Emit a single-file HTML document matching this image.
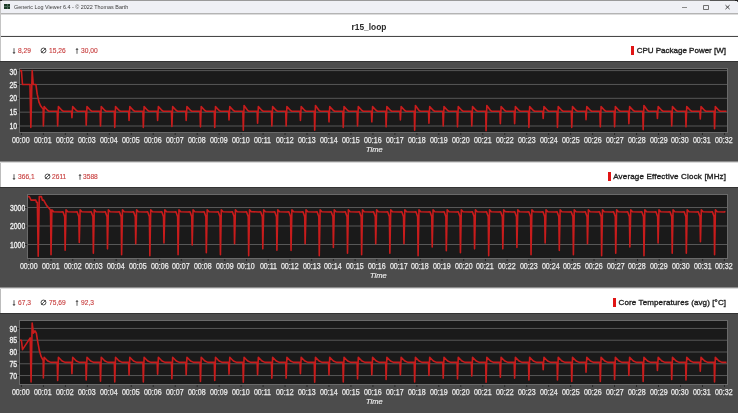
<!DOCTYPE html>
<html><head><meta charset="utf-8"><style>
html,body{margin:0;padding:0;}
body{width:738px;height:413px;overflow:hidden;position:relative;background:#4c4c4c;font-family:"Liberation Sans",sans-serif;}
.abs{position:absolute;}
.stat{position:absolute;font-size:8px;line-height:10px;white-space:nowrap;color:#c84040;-webkit-text-stroke:0.15px #c84040;}
.arr{position:absolute;font-size:7px;line-height:10px;white-space:nowrap;color:#303030;}
.leg{position:absolute;font-size:8px;line-height:10px;white-space:nowrap;color:#232323;-webkit-text-stroke:0.35px #232323;}
.leg::before{content:"";position:absolute;left:-5.2px;top:-0.4px;width:2.7px;height:9.2px;background:#e01515;-webkit-text-stroke:0}
.xl{position:absolute;width:30px;text-align:center;font-size:8.6px;line-height:10px;color:#ececec;white-space:nowrap}
.xl span{display:inline-block;transform:scaleX(0.82);-webkit-text-stroke:0.25px #ececec}
.yl{position:absolute;left:0;text-align:right;font-size:8.2px;line-height:10px;color:#e8e8e8;white-space:nowrap}
.yl span{display:inline-block;transform:scaleX(0.84);transform-origin:100% 50%;-webkit-text-stroke:0.3px #f0f0f0;color:#f0f0f0}
svg{position:absolute;left:0;top:0;}
*{-webkit-font-smoothing:antialiased;}
.wrap{position:absolute;left:0;top:0;width:738px;height:413px;will-change:transform;}
</style></head><body><div class="wrap">

<div class="abs" style="left:0;top:0;width:738px;height:14px;background:#eff0f5"></div>
<div class="abs" style="left:0;top:0;width:738px;height:1px;background:#9a9a9a"></div>
<div class="abs" style="left:0;top:13px;width:738px;height:1px;background:#b4b4b4"></div>
<div class="abs" style="left:0;top:14px;width:738px;height:1px;background:#dcdcdc"></div>
<div class="abs" style="left:0;top:15px;width:738px;height:21px;background:#fff"></div>
<div class="abs" style="left:0;top:36px;width:738px;height:1px;background:#484848"></div>
<div class="abs" style="left:0;top:35px;width:738px;height:1px;background:#f2f2f2"></div>
<div class="abs" style="left:0;top:37px;width:738px;height:24px;background:#fff"></div>
<div class="abs" style="left:4px;top:4px;width:6px;height:5px;background:#1c3a28"></div>
<div class="abs" style="left:4px;top:6px;width:6px;height:1px;background:#4a6a58"></div>
<div class="abs" style="left:6.5px;top:4px;width:1px;height:5px;background:#4a6a58"></div>
<div class="abs" style="left:0;top:0;width:2px;height:1px;background:#222"></div>
<div class="abs" style="left:710px;top:0;width:28px;height:1px;background:#555"></div>
<div class="abs" style="left:735px;top:0;width:3px;height:1px;background:#222"></div>
<div class="abs" style="left:737px;top:1px;width:1px;height:1px;background:#555"></div>
<div class="abs" style="left:14px;top:2.3px;font-size:6.2px;line-height:10px;color:#3c3c3c;white-space:nowrap;transform:scaleX(0.875);transform-origin:0 0">Generic Log Viewer 6.4 - © 2022 Thomas Barth</div>
<div class="abs" style="left:682px;top:6.5px;width:5px;height:1px;background:#8a8a8a"></div>
<div class="abs" style="left:703.3px;top:4.8px;width:3.4px;height:3.4px;border:0.9px solid #707070;border-radius:0.8px"></div>
<svg width="738" height="413" style="pointer-events:none"><path d="M725.5 5.2 L729.6 9.1 M729.6 5.2 L725.5 9.1" stroke="#3a3a3a" stroke-width="0.95"/></svg>
<div class="abs" style="left:0;top:20.5px;width:738px;text-align:center;font-size:8.4px;line-height:12px;font-weight:bold;color:#2a2a2a">r15_loop</div>
<div class="abs" style="left:0;top:61px;width:738px;height:1px;background:#333"></div>
<div class="abs" style="left:0;top:161px;width:738px;height:1px;background:#8c8c8c"></div>
<div class="abs" style="left:0;width:738px;background:#fff;top:162px;height:25px"></div>
<div class="abs" style="left:0;width:1px;background:#bcbcbc;top:162px;height:25px"></div>
<div class="abs" style="left:0;width:738px;background:#dadada;top:162px;height:1px"></div>
<div class="xl" style="left:6.15px;top:135.2px"><span>00:00</span></div>
<div class="xl" style="left:28.12px;top:135.2px"><span>00:01</span></div>
<div class="xl" style="left:50.09px;top:135.2px"><span>00:02</span></div>
<div class="xl" style="left:72.06px;top:135.2px"><span>00:03</span></div>
<div class="xl" style="left:94.03px;top:135.2px"><span>00:04</span></div>
<div class="xl" style="left:116.00px;top:135.2px"><span>00:05</span></div>
<div class="xl" style="left:137.97px;top:135.2px"><span>00:06</span></div>
<div class="xl" style="left:159.94px;top:135.2px"><span>00:07</span></div>
<div class="xl" style="left:181.91px;top:135.2px"><span>00:08</span></div>
<div class="xl" style="left:203.88px;top:135.2px"><span>00:09</span></div>
<div class="xl" style="left:225.85px;top:135.2px"><span>00:10</span></div>
<div class="xl" style="left:247.82px;top:135.2px"><span>00:11</span></div>
<div class="xl" style="left:269.79px;top:135.2px"><span>00:12</span></div>
<div class="xl" style="left:291.76px;top:135.2px"><span>00:13</span></div>
<div class="xl" style="left:313.73px;top:135.2px"><span>00:14</span></div>
<div class="xl" style="left:335.70px;top:135.2px"><span>00:15</span></div>
<div class="xl" style="left:357.67px;top:135.2px"><span>00:16</span></div>
<div class="xl" style="left:379.64px;top:135.2px"><span>00:17</span></div>
<div class="xl" style="left:401.61px;top:135.2px"><span>00:18</span></div>
<div class="xl" style="left:423.58px;top:135.2px"><span>00:19</span></div>
<div class="xl" style="left:445.55px;top:135.2px"><span>00:20</span></div>
<div class="xl" style="left:467.52px;top:135.2px"><span>00:21</span></div>
<div class="xl" style="left:489.49px;top:135.2px"><span>00:22</span></div>
<div class="xl" style="left:511.46px;top:135.2px"><span>00:23</span></div>
<div class="xl" style="left:533.43px;top:135.2px"><span>00:24</span></div>
<div class="xl" style="left:555.40px;top:135.2px"><span>00:25</span></div>
<div class="xl" style="left:577.37px;top:135.2px"><span>00:26</span></div>
<div class="xl" style="left:599.34px;top:135.2px"><span>00:27</span></div>
<div class="xl" style="left:621.31px;top:135.2px"><span>00:28</span></div>
<div class="xl" style="left:643.28px;top:135.2px"><span>00:29</span></div>
<div class="xl" style="left:665.25px;top:135.2px"><span>00:30</span></div>
<div class="xl" style="left:687.22px;top:135.2px"><span>00:31</span></div>
<div class="xl" style="left:709.19px;top:135.2px"><span>00:32</span></div>
<div class="yl" style="width:17.6px;top:122.10px"><span>10</span></div>
<div class="yl" style="width:17.6px;top:108.25px"><span>15</span></div>
<div class="yl" style="width:17.6px;top:94.40px"><span>20</span></div>
<div class="yl" style="width:17.6px;top:80.55px"><span>25</span></div>
<div class="yl" style="width:17.6px;top:67.50px"><span>30</span></div>
<div class="abs" style="left:354.30px;width:40px;top:145px;text-align:center;font-size:7.5px;line-height:10px;font-style:italic;color:#f0f0f0;-webkit-text-stroke:0.15px #f0f0f0">Time</div>
<div class="abs" style="left:0;top:187px;width:738px;height:1px;background:#333"></div>
<div class="abs" style="left:0;top:287px;width:738px;height:1px;background:#8c8c8c"></div>
<div class="abs" style="left:0;width:738px;background:#fff;top:288px;height:25px"></div>
<div class="abs" style="left:0;width:1px;background:#bcbcbc;top:288px;height:25px"></div>
<div class="abs" style="left:0;width:738px;background:#dadada;top:288px;height:1px"></div>
<div class="xl" style="left:14.05px;top:261.2px"><span>00:00</span></div>
<div class="xl" style="left:35.77px;top:261.2px"><span>00:01</span></div>
<div class="xl" style="left:57.49px;top:261.2px"><span>00:02</span></div>
<div class="xl" style="left:79.21px;top:261.2px"><span>00:03</span></div>
<div class="xl" style="left:100.93px;top:261.2px"><span>00:04</span></div>
<div class="xl" style="left:122.65px;top:261.2px"><span>00:05</span></div>
<div class="xl" style="left:144.37px;top:261.2px"><span>00:06</span></div>
<div class="xl" style="left:166.09px;top:261.2px"><span>00:07</span></div>
<div class="xl" style="left:187.81px;top:261.2px"><span>00:08</span></div>
<div class="xl" style="left:209.53px;top:261.2px"><span>00:09</span></div>
<div class="xl" style="left:231.25px;top:261.2px"><span>00:10</span></div>
<div class="xl" style="left:252.97px;top:261.2px"><span>00:11</span></div>
<div class="xl" style="left:274.69px;top:261.2px"><span>00:12</span></div>
<div class="xl" style="left:296.41px;top:261.2px"><span>00:13</span></div>
<div class="xl" style="left:318.13px;top:261.2px"><span>00:14</span></div>
<div class="xl" style="left:339.85px;top:261.2px"><span>00:15</span></div>
<div class="xl" style="left:361.57px;top:261.2px"><span>00:16</span></div>
<div class="xl" style="left:383.29px;top:261.2px"><span>00:17</span></div>
<div class="xl" style="left:405.01px;top:261.2px"><span>00:18</span></div>
<div class="xl" style="left:426.73px;top:261.2px"><span>00:19</span></div>
<div class="xl" style="left:448.45px;top:261.2px"><span>00:20</span></div>
<div class="xl" style="left:470.17px;top:261.2px"><span>00:21</span></div>
<div class="xl" style="left:491.89px;top:261.2px"><span>00:22</span></div>
<div class="xl" style="left:513.61px;top:261.2px"><span>00:23</span></div>
<div class="xl" style="left:535.33px;top:261.2px"><span>00:24</span></div>
<div class="xl" style="left:557.05px;top:261.2px"><span>00:25</span></div>
<div class="xl" style="left:578.77px;top:261.2px"><span>00:26</span></div>
<div class="xl" style="left:600.49px;top:261.2px"><span>00:27</span></div>
<div class="xl" style="left:622.21px;top:261.2px"><span>00:28</span></div>
<div class="xl" style="left:643.93px;top:261.2px"><span>00:29</span></div>
<div class="xl" style="left:665.65px;top:261.2px"><span>00:30</span></div>
<div class="xl" style="left:687.37px;top:261.2px"><span>00:31</span></div>
<div class="xl" style="left:709.09px;top:261.2px"><span>00:32</span></div>
<div class="yl" style="width:25.7px;top:240.60px"><span>1000</span></div>
<div class="yl" style="width:25.7px;top:222.10px"><span>2000</span></div>
<div class="yl" style="width:25.7px;top:203.60px"><span>3000</span></div>
<div class="abs" style="left:358.30px;width:40px;top:271px;text-align:center;font-size:7.5px;line-height:10px;font-style:italic;color:#f0f0f0;-webkit-text-stroke:0.15px #f0f0f0">Time</div>
<div class="abs" style="left:0;top:313px;width:738px;height:1px;background:#333"></div>
<div class="xl" style="left:6.15px;top:387.2px"><span>00:00</span></div>
<div class="xl" style="left:28.12px;top:387.2px"><span>00:01</span></div>
<div class="xl" style="left:50.09px;top:387.2px"><span>00:02</span></div>
<div class="xl" style="left:72.06px;top:387.2px"><span>00:03</span></div>
<div class="xl" style="left:94.03px;top:387.2px"><span>00:04</span></div>
<div class="xl" style="left:116.00px;top:387.2px"><span>00:05</span></div>
<div class="xl" style="left:137.97px;top:387.2px"><span>00:06</span></div>
<div class="xl" style="left:159.94px;top:387.2px"><span>00:07</span></div>
<div class="xl" style="left:181.91px;top:387.2px"><span>00:08</span></div>
<div class="xl" style="left:203.88px;top:387.2px"><span>00:09</span></div>
<div class="xl" style="left:225.85px;top:387.2px"><span>00:10</span></div>
<div class="xl" style="left:247.82px;top:387.2px"><span>00:11</span></div>
<div class="xl" style="left:269.79px;top:387.2px"><span>00:12</span></div>
<div class="xl" style="left:291.76px;top:387.2px"><span>00:13</span></div>
<div class="xl" style="left:313.73px;top:387.2px"><span>00:14</span></div>
<div class="xl" style="left:335.70px;top:387.2px"><span>00:15</span></div>
<div class="xl" style="left:357.67px;top:387.2px"><span>00:16</span></div>
<div class="xl" style="left:379.64px;top:387.2px"><span>00:17</span></div>
<div class="xl" style="left:401.61px;top:387.2px"><span>00:18</span></div>
<div class="xl" style="left:423.58px;top:387.2px"><span>00:19</span></div>
<div class="xl" style="left:445.55px;top:387.2px"><span>00:20</span></div>
<div class="xl" style="left:467.52px;top:387.2px"><span>00:21</span></div>
<div class="xl" style="left:489.49px;top:387.2px"><span>00:22</span></div>
<div class="xl" style="left:511.46px;top:387.2px"><span>00:23</span></div>
<div class="xl" style="left:533.43px;top:387.2px"><span>00:24</span></div>
<div class="xl" style="left:555.40px;top:387.2px"><span>00:25</span></div>
<div class="xl" style="left:577.37px;top:387.2px"><span>00:26</span></div>
<div class="xl" style="left:599.34px;top:387.2px"><span>00:27</span></div>
<div class="xl" style="left:621.31px;top:387.2px"><span>00:28</span></div>
<div class="xl" style="left:643.28px;top:387.2px"><span>00:29</span></div>
<div class="xl" style="left:665.25px;top:387.2px"><span>00:30</span></div>
<div class="xl" style="left:687.22px;top:387.2px"><span>00:31</span></div>
<div class="xl" style="left:709.19px;top:387.2px"><span>00:32</span></div>
<div class="yl" style="width:17.6px;top:371.65px"><span>70</span></div>
<div class="yl" style="width:17.6px;top:359.87px"><span>75</span></div>
<div class="yl" style="width:17.6px;top:348.10px"><span>80</span></div>
<div class="yl" style="width:17.6px;top:336.32px"><span>85</span></div>
<div class="yl" style="width:17.6px;top:325.35px"><span>90</span></div>
<div class="abs" style="left:354.30px;width:40px;top:397px;text-align:center;font-size:7.5px;line-height:10px;font-style:italic;color:#f0f0f0;-webkit-text-stroke:0.15px #f0f0f0">Time</div>
<svg width="738" height="413">
<rect x="19" y="68" width="709" height="65" fill="#1a1a1a"/>
<line x1="19" x2="728" y1="126.00" y2="126.00" stroke="#575757" stroke-width="1"/>
<rect x="17" y="125.50" width="2" height="1" fill="#262626"/>
<line x1="19" x2="728" y1="112.15" y2="112.15" stroke="#575757" stroke-width="1"/>
<rect x="17" y="111.65" width="2" height="1" fill="#262626"/>
<line x1="19" x2="728" y1="98.30" y2="98.30" stroke="#575757" stroke-width="1"/>
<rect x="17" y="97.80" width="2" height="1" fill="#262626"/>
<line x1="19" x2="728" y1="84.45" y2="84.45" stroke="#575757" stroke-width="1"/>
<rect x="17" y="83.95" width="2" height="1" fill="#262626"/>
<line x1="19" x2="728" y1="70.60" y2="70.60" stroke="#575757" stroke-width="1"/>
<rect x="17" y="70.10" width="2" height="1" fill="#262626"/>
<rect x="19.5" y="68.5" width="708" height="64" fill="none" stroke="#6a6a6a" stroke-width="1"/>
<polyline points="20.00,70.60 21.40,70.60 22.50,84.45 29.97,84.45 30.85,127.38 32.17,70.60 33.26,84.45 35.90,84.45 37.22,94.14 38.98,102.18 40.73,106.06 42.05,107.72 43.15,108.83 43.37,126.00 44.14,106.61 47.76,110.49 49.08,111.18 57.21,111.18 57.65,126.00 58.42,106.61 62.04,110.49 63.36,111.18 71.49,111.18 71.93,117.69 72.70,106.61 76.32,110.49 77.64,111.18 85.77,111.18 86.21,125.17 86.98,106.61 90.61,110.49 91.92,111.18 100.05,111.18 100.49,126.00 101.26,106.61 104.89,110.49 106.20,111.18 114.33,111.18 114.77,127.38 115.54,106.61 119.17,110.49 120.48,111.18 128.61,111.18 129.05,120.46 129.82,106.61 133.45,110.49 134.77,111.18 142.89,111.18 143.33,127.38 144.10,106.61 147.73,110.49 149.05,111.18 157.17,111.18 157.61,120.46 158.38,106.61 162.01,110.49 163.33,111.18 171.46,111.18 171.89,126.55 172.66,106.61 176.29,110.49 177.61,111.18 185.74,111.18 186.17,120.46 186.94,106.61 190.57,110.49 191.89,111.18 200.02,111.18 200.46,126.83 201.22,106.61 204.85,110.49 206.17,111.18 214.30,111.18 214.74,127.38 215.50,106.61 219.13,110.49 220.45,111.18 228.58,111.18 229.02,119.91 229.79,106.61 233.41,110.49 234.73,111.18 242.86,111.18 243.30,130.15 244.07,105.50 247.69,110.49 249.01,111.18 257.14,111.18 257.58,123.23 258.35,106.61 261.97,110.49 263.29,111.18 271.42,111.18 271.86,126.00 272.63,106.61 276.25,110.49 277.57,111.18 285.70,111.18 286.14,126.00 286.91,106.61 290.53,110.49 291.85,111.18 299.98,111.18 300.42,120.46 301.19,106.61 304.81,110.49 306.13,111.18 314.26,111.18 314.70,130.15 315.47,105.50 319.09,110.49 320.41,111.18 328.54,111.18 328.98,121.84 329.75,106.61 333.37,110.49 334.69,111.18 342.82,111.18 343.26,127.38 344.03,106.61 347.65,110.49 348.97,111.18 357.10,111.18 357.54,126.00 358.31,106.61 361.93,110.49 363.25,111.18 371.38,111.18 371.82,121.84 372.59,106.61 376.22,110.49 377.53,111.18 385.66,111.18 386.10,126.83 386.87,106.61 390.50,110.49 391.81,111.18 399.94,111.18 400.38,119.91 401.15,106.61 404.78,110.49 406.09,111.18 414.22,111.18 414.66,130.15 415.43,105.50 419.06,110.49 420.38,111.18 428.50,111.18 428.94,123.23 429.71,106.61 433.34,110.49 434.66,111.18 442.78,111.18 443.22,126.00 443.99,106.61 447.62,110.49 448.94,111.18 457.07,111.18 457.50,126.83 458.27,106.61 461.90,110.49 463.22,111.18 471.35,111.18 471.78,126.00 472.55,106.61 476.18,110.49 477.50,111.18 485.63,111.18 486.07,130.71 486.83,105.50 490.46,110.49 491.78,111.18 499.91,111.18 500.35,123.78 501.11,106.61 504.74,110.49 506.06,111.18 514.19,111.18 514.63,123.78 515.40,106.61 519.02,110.49 520.34,111.18 528.47,111.18 528.91,127.38 529.68,106.61 533.30,110.49 534.62,111.18 542.75,111.18 543.19,118.52 543.96,106.61 547.58,110.49 548.90,111.18 557.03,111.18 557.47,127.38 558.24,106.61 561.86,110.49 563.18,111.18 571.31,111.18 571.75,127.38 572.52,106.61 576.14,110.49 577.46,111.18 585.59,111.18 586.03,119.63 586.80,106.61 590.42,110.49 591.74,111.18 599.87,111.18 600.31,126.83 601.08,106.61 604.70,110.49 606.02,111.18 614.15,111.18 614.59,126.83 615.36,106.61 618.98,110.49 620.30,111.18 628.43,111.18 628.87,123.78 629.64,106.61 633.26,110.49 634.58,111.18 642.71,111.18 643.15,129.60 643.92,105.50 647.54,110.49 648.86,111.18 656.99,111.18 657.43,118.52 658.20,106.61 661.83,110.49 663.14,111.18 671.27,111.18 671.71,126.00 672.48,106.61 676.11,110.49 677.42,111.18 685.55,111.18 685.99,126.83 686.76,106.61 690.39,110.49 691.70,111.18 699.83,111.18 700.27,119.07 701.04,106.61 704.67,110.49 705.99,111.18 714.11,111.18 714.55,128.77 715.32,106.61 718.95,110.49 720.27,111.18 726.50,111.18" fill="none" stroke="#c81c1c" stroke-width="1.6" stroke-linejoin="round"/>
<rect x="20.90" y="133" width="1" height="2" fill="#262626"/>
<rect x="42.87" y="133" width="1" height="2" fill="#262626"/>
<rect x="64.84" y="133" width="1" height="2" fill="#262626"/>
<rect x="86.81" y="133" width="1" height="2" fill="#262626"/>
<rect x="108.78" y="133" width="1" height="2" fill="#262626"/>
<rect x="130.75" y="133" width="1" height="2" fill="#262626"/>
<rect x="152.72" y="133" width="1" height="2" fill="#262626"/>
<rect x="174.69" y="133" width="1" height="2" fill="#262626"/>
<rect x="196.66" y="133" width="1" height="2" fill="#262626"/>
<rect x="218.63" y="133" width="1" height="2" fill="#262626"/>
<rect x="240.60" y="133" width="1" height="2" fill="#262626"/>
<rect x="262.57" y="133" width="1" height="2" fill="#262626"/>
<rect x="284.54" y="133" width="1" height="2" fill="#262626"/>
<rect x="306.51" y="133" width="1" height="2" fill="#262626"/>
<rect x="328.48" y="133" width="1" height="2" fill="#262626"/>
<rect x="350.45" y="133" width="1" height="2" fill="#262626"/>
<rect x="372.42" y="133" width="1" height="2" fill="#262626"/>
<rect x="394.39" y="133" width="1" height="2" fill="#262626"/>
<rect x="416.36" y="133" width="1" height="2" fill="#262626"/>
<rect x="438.33" y="133" width="1" height="2" fill="#262626"/>
<rect x="460.30" y="133" width="1" height="2" fill="#262626"/>
<rect x="482.27" y="133" width="1" height="2" fill="#262626"/>
<rect x="504.24" y="133" width="1" height="2" fill="#262626"/>
<rect x="526.21" y="133" width="1" height="2" fill="#262626"/>
<rect x="548.18" y="133" width="1" height="2" fill="#262626"/>
<rect x="570.15" y="133" width="1" height="2" fill="#262626"/>
<rect x="592.12" y="133" width="1" height="2" fill="#262626"/>
<rect x="614.09" y="133" width="1" height="2" fill="#262626"/>
<rect x="636.06" y="133" width="1" height="2" fill="#262626"/>
<rect x="658.03" y="133" width="1" height="2" fill="#262626"/>
<rect x="680.00" y="133" width="1" height="2" fill="#262626"/>
<rect x="701.97" y="133" width="1" height="2" fill="#262626"/>
<rect x="723.94" y="133" width="1" height="2" fill="#262626"/>
<rect x="27" y="194" width="701" height="65" fill="#1a1a1a"/>
<line x1="27" x2="728" y1="244.50" y2="244.50" stroke="#575757" stroke-width="1"/>
<rect x="25" y="244.00" width="2" height="1" fill="#262626"/>
<line x1="27" x2="728" y1="226.00" y2="226.00" stroke="#575757" stroke-width="1"/>
<rect x="25" y="225.50" width="2" height="1" fill="#262626"/>
<line x1="27" x2="728" y1="207.50" y2="207.50" stroke="#575757" stroke-width="1"/>
<rect x="25" y="207.00" width="2" height="1" fill="#262626"/>
<rect x="27.5" y="194.5" width="700" height="64" fill="none" stroke="#6a6a6a" stroke-width="1"/>
<polyline points="28.00,196.62 29.30,196.62 31.04,200.10 35.82,200.10 36.47,202.32 37.34,202.32 38.21,256.23 39.29,196.62 41.46,196.62 42.33,200.10 43.64,200.10 46.68,205.65 49.28,208.43 50.37,209.91 50.59,216.75 51.02,254.71 51.89,209.91 53.63,211.75 60.79,211.94 62.97,211.75 64.70,216.75 65.14,250.16 66.01,209.91 67.74,211.75 74.91,211.94 77.08,211.75 78.82,216.75 79.26,242.47 80.12,209.91 81.86,211.75 89.03,211.94 91.20,211.75 92.94,216.75 93.37,253.19 94.24,209.91 95.98,211.75 103.15,211.94 105.32,211.75 107.06,216.75 107.49,248.85 108.36,209.91 110.10,211.75 117.27,211.94 119.44,211.75 121.18,216.75 121.61,254.71 122.48,209.91 124.22,211.75 131.38,211.94 133.56,211.75 135.29,216.75 135.73,243.76 136.60,209.91 138.33,211.75 145.50,211.94 147.67,211.75 149.41,216.75 149.85,255.78 150.71,209.91 152.45,211.75 159.62,211.94 161.79,211.75 163.53,216.75 163.96,243.02 164.83,209.91 166.57,211.75 173.74,211.94 175.91,211.75 177.65,216.75 178.08,254.71 178.95,209.91 180.69,211.75 187.86,211.94 190.03,211.75 191.77,216.75 192.20,245.00 193.07,209.91 194.81,211.75 201.97,211.94 204.15,211.75 205.88,216.75 206.32,252.70 207.19,209.91 208.92,211.75 216.09,211.94 218.26,211.75 220.00,216.75 220.44,254.71 221.30,209.91 223.04,211.75 230.21,211.94 232.38,211.75 234.12,216.75 234.55,243.76 235.42,209.91 237.16,211.75 244.33,211.94 246.50,211.75 248.24,216.75 248.67,255.78 249.54,209.91 251.28,211.75 258.45,211.94 260.62,211.75 262.36,216.75 262.79,248.85 263.66,209.91 265.40,211.75 272.56,211.94 274.74,211.75 276.47,216.75 276.91,250.16 277.78,209.91 279.51,211.75 286.68,211.94 288.85,211.75 290.59,216.75 291.03,250.36 291.89,209.91 293.63,211.75 300.80,211.94 302.97,211.75 304.71,216.75 305.14,243.76 306.01,209.91 307.75,211.75 314.92,211.94 317.09,211.75 318.83,216.75 319.26,255.78 320.13,209.91 321.87,211.75 329.04,211.94 331.21,211.75 332.95,216.75 333.38,247.53 334.25,209.91 335.99,211.75 343.15,211.94 345.33,211.75 347.06,216.75 347.50,253.19 348.37,209.91 350.10,211.75 357.27,211.94 359.44,211.75 361.18,216.75 361.62,254.71 362.48,209.91 364.22,211.75 371.39,211.94 373.56,211.75 375.30,216.75 375.73,243.76 376.60,209.91 378.34,211.75 385.51,211.94 387.68,211.75 389.42,216.75 389.85,253.19 390.72,209.91 392.46,211.75 399.63,211.94 401.80,211.75 403.54,216.75 403.97,243.76 404.84,209.91 406.58,211.75 413.74,211.94 415.92,211.75 417.65,216.75 418.09,255.78 418.96,209.91 420.69,211.75 427.86,211.94 430.03,211.75 431.77,216.75 432.21,247.02 433.07,209.91 434.81,211.75 441.98,211.94 444.15,211.75 445.89,216.75 446.32,250.66 447.19,209.91 448.93,211.75 456.10,211.94 458.27,211.75 460.01,216.75 460.44,252.70 461.31,209.91 463.05,211.75 470.22,211.94 472.39,211.75 474.13,216.75 474.56,248.85 475.43,209.91 477.17,211.75 484.33,211.94 486.51,211.75 488.24,216.75 488.68,255.78 489.55,209.91 491.28,211.75 498.45,211.94 500.62,211.75 502.36,216.75 502.80,248.85 503.66,209.91 505.40,211.75 512.57,211.94 514.74,211.75 516.48,216.75 516.91,247.53 517.78,209.91 519.52,211.75 526.69,211.94 528.86,211.75 530.60,216.75 531.03,254.71 531.90,209.91 533.64,211.75 540.81,211.94 542.98,211.75 544.72,216.75 545.15,243.02 546.02,209.91 547.76,211.75 554.92,211.94 557.10,211.75 558.83,216.75 559.27,250.36 560.14,209.91 561.87,211.75 569.04,211.94 571.21,211.75 572.95,216.75 573.39,254.71 574.25,209.91 575.99,211.75 583.16,211.94 585.33,211.75 587.07,216.75 587.50,243.76 588.37,209.91 590.11,211.75 597.28,211.94 599.45,211.75 601.19,216.75 601.62,255.78 602.49,209.91 604.23,211.75 611.40,211.94 613.57,211.75 615.31,216.75 615.74,253.19 616.61,209.91 618.35,211.75 625.51,211.94 627.69,211.75 629.42,216.75 629.86,247.02 630.73,209.91 632.46,211.75 639.63,211.94 641.80,211.75 643.54,216.75 643.98,255.78 644.84,209.91 646.58,211.75 653.75,211.94 655.92,211.75 657.66,216.75 658.09,243.02 658.96,209.91 660.70,211.75 667.87,211.94 670.04,211.75 671.78,216.75 672.21,253.19 673.08,209.91 674.82,211.75 681.99,211.94 684.16,211.75 685.90,216.75 686.33,253.19 687.20,209.91 688.94,211.75 696.10,211.94 698.28,211.75 700.01,216.75 700.45,241.72 701.32,209.91 703.05,211.75 710.22,211.94 712.39,211.75 714.13,216.75 714.57,254.71 715.43,209.91 717.17,211.75 724.34,211.94 725.43,211.38" fill="none" stroke="#c81c1c" stroke-width="1.6" stroke-linejoin="round"/>
<rect x="28.80" y="259" width="1" height="2" fill="#262626"/>
<rect x="50.52" y="259" width="1" height="2" fill="#262626"/>
<rect x="72.24" y="259" width="1" height="2" fill="#262626"/>
<rect x="93.96" y="259" width="1" height="2" fill="#262626"/>
<rect x="115.68" y="259" width="1" height="2" fill="#262626"/>
<rect x="137.40" y="259" width="1" height="2" fill="#262626"/>
<rect x="159.12" y="259" width="1" height="2" fill="#262626"/>
<rect x="180.84" y="259" width="1" height="2" fill="#262626"/>
<rect x="202.56" y="259" width="1" height="2" fill="#262626"/>
<rect x="224.28" y="259" width="1" height="2" fill="#262626"/>
<rect x="246.00" y="259" width="1" height="2" fill="#262626"/>
<rect x="267.72" y="259" width="1" height="2" fill="#262626"/>
<rect x="289.44" y="259" width="1" height="2" fill="#262626"/>
<rect x="311.16" y="259" width="1" height="2" fill="#262626"/>
<rect x="332.88" y="259" width="1" height="2" fill="#262626"/>
<rect x="354.60" y="259" width="1" height="2" fill="#262626"/>
<rect x="376.32" y="259" width="1" height="2" fill="#262626"/>
<rect x="398.04" y="259" width="1" height="2" fill="#262626"/>
<rect x="419.76" y="259" width="1" height="2" fill="#262626"/>
<rect x="441.48" y="259" width="1" height="2" fill="#262626"/>
<rect x="463.20" y="259" width="1" height="2" fill="#262626"/>
<rect x="484.92" y="259" width="1" height="2" fill="#262626"/>
<rect x="506.64" y="259" width="1" height="2" fill="#262626"/>
<rect x="528.36" y="259" width="1" height="2" fill="#262626"/>
<rect x="550.08" y="259" width="1" height="2" fill="#262626"/>
<rect x="571.80" y="259" width="1" height="2" fill="#262626"/>
<rect x="593.52" y="259" width="1" height="2" fill="#262626"/>
<rect x="615.24" y="259" width="1" height="2" fill="#262626"/>
<rect x="636.96" y="259" width="1" height="2" fill="#262626"/>
<rect x="658.68" y="259" width="1" height="2" fill="#262626"/>
<rect x="680.40" y="259" width="1" height="2" fill="#262626"/>
<rect x="702.12" y="259" width="1" height="2" fill="#262626"/>
<rect x="723.84" y="259" width="1" height="2" fill="#262626"/>
<rect x="19" y="320" width="709" height="65" fill="#1a1a1a"/>
<line x1="19" x2="728" y1="375.55" y2="375.55" stroke="#575757" stroke-width="1"/>
<rect x="17" y="375.05" width="2" height="1" fill="#262626"/>
<line x1="19" x2="728" y1="363.77" y2="363.77" stroke="#575757" stroke-width="1"/>
<rect x="17" y="363.27" width="2" height="1" fill="#262626"/>
<line x1="19" x2="728" y1="352.00" y2="352.00" stroke="#575757" stroke-width="1"/>
<rect x="17" y="351.50" width="2" height="1" fill="#262626"/>
<line x1="19" x2="728" y1="340.22" y2="340.22" stroke="#575757" stroke-width="1"/>
<rect x="17" y="339.72" width="2" height="1" fill="#262626"/>
<line x1="19" x2="728" y1="328.45" y2="328.45" stroke="#575757" stroke-width="1"/>
<rect x="17" y="327.95" width="2" height="1" fill="#262626"/>
<rect x="19.5" y="320.5" width="708" height="64" fill="none" stroke="#6a6a6a" stroke-width="1"/>
<polyline points="20.00,340.22 21.40,340.22 22.50,349.64 30.19,337.87 31.07,381.91 32.17,323.03 33.48,333.16 35.02,330.80 36.34,333.16 37.88,342.58 39.42,350.82 41.17,356.71 43.15,360.24 43.37,378.07 44.14,357.18 47.76,360.95 50.84,362.36 57.21,362.36 57.65,380.57 58.42,357.18 62.04,360.95 65.12,362.36 71.49,362.36 71.93,373.81 72.70,357.18 76.32,360.95 79.40,362.36 85.77,362.36 86.21,380.07 86.98,357.18 90.61,360.95 93.68,362.36 100.05,362.36 100.49,381.32 101.26,357.18 104.89,360.95 107.96,362.36 114.33,362.36 114.77,382.07 115.54,357.18 119.17,360.95 122.24,362.36 128.61,362.36 129.05,375.06 129.82,357.18 133.45,360.95 136.52,362.36 142.89,362.36 143.33,382.07 144.10,357.18 147.73,360.95 150.80,362.36 157.17,362.36 157.61,374.30 158.38,357.18 162.01,360.95 165.08,362.36 171.46,362.36 171.89,378.82 172.66,357.18 176.29,360.95 179.36,362.36 185.74,362.36 186.17,374.84 186.94,357.18 190.57,360.95 193.64,362.36 200.02,362.36 200.46,381.44 201.22,357.18 204.85,360.95 207.93,362.36 214.30,362.36 214.74,380.50 215.50,357.18 219.13,360.95 222.21,362.36 228.58,362.36 229.02,374.14 229.79,357.18 233.41,360.95 236.49,362.36 242.86,362.36 243.30,382.14 244.07,357.18 247.69,360.95 250.77,362.36 257.14,362.36 257.58,374.84 258.35,357.18 261.97,360.95 265.05,362.36 271.42,362.36 271.86,378.14 272.63,357.18 276.25,360.95 279.33,362.36 285.70,362.36 286.14,378.14 286.91,357.18 290.53,360.95 293.61,362.36 299.98,362.36 300.42,373.67 301.19,357.18 304.81,360.95 307.89,362.36 314.26,362.36 314.70,382.14 315.47,357.18 319.09,360.95 322.17,362.36 328.54,362.36 328.98,374.84 329.75,357.18 333.37,360.95 336.45,362.36 342.82,362.36 343.26,381.91 344.03,357.18 347.65,360.95 350.73,362.36 357.10,362.36 357.54,378.85 358.31,357.18 361.93,360.95 365.01,362.36 371.38,362.36 371.82,374.84 372.59,357.18 376.22,360.95 379.29,362.36 385.66,362.36 386.10,379.55 386.87,357.18 390.50,360.95 393.57,362.36 399.94,362.36 400.38,374.84 401.15,357.18 404.78,360.95 407.85,362.36 414.22,362.36 414.66,381.91 415.43,357.18 419.06,360.95 422.13,362.36 428.50,362.36 428.94,375.55 429.71,357.18 433.34,360.95 436.41,362.36 442.78,362.36 443.22,378.14 443.99,357.18 447.62,360.95 450.69,362.36 457.07,362.36 457.50,378.85 458.27,357.18 461.90,360.95 464.97,362.36 471.35,362.36 471.78,376.02 472.55,357.18 476.18,360.95 479.25,362.36 485.63,362.36 486.07,382.14 486.83,357.18 490.46,360.95 493.54,362.36 499.91,362.36 500.35,377.20 501.11,357.18 504.74,360.95 507.82,362.36 514.19,362.36 514.63,378.14 515.40,357.18 519.02,360.95 522.10,362.36 528.47,362.36 528.91,380.02 529.68,357.18 533.30,360.95 536.38,362.36 542.75,362.36 543.19,369.66 543.96,357.18 547.58,360.95 550.66,362.36 557.03,362.36 557.47,380.02 558.24,357.18 561.86,360.95 564.94,362.36 571.31,362.36 571.75,381.44 572.52,357.18 576.14,360.95 579.22,362.36 585.59,362.36 586.03,372.25 586.80,357.18 590.42,360.95 593.50,362.36 599.87,362.36 600.31,381.44 601.08,357.18 604.70,360.95 607.78,362.36 614.15,362.36 614.59,379.55 615.36,357.18 618.98,360.95 622.06,362.36 628.43,362.36 628.87,375.55 629.64,357.18 633.26,360.95 636.34,362.36 642.71,362.36 643.15,381.44 643.92,357.18 647.54,360.95 650.62,362.36 656.99,362.36 657.43,370.37 658.20,357.18 661.83,360.95 664.90,362.36 671.27,362.36 671.71,379.55 672.48,357.18 676.11,360.95 679.18,362.36 685.55,362.36 685.99,380.02 686.76,357.18 690.39,360.95 693.46,362.36 699.83,362.36 700.27,371.31 701.04,357.18 704.67,360.95 707.74,362.36 714.11,362.36 714.55,381.91 715.32,357.18 718.95,360.95 722.02,362.36 726.50,362.36" fill="none" stroke="#c81c1c" stroke-width="1.6" stroke-linejoin="round"/>
<rect x="20.90" y="385" width="1" height="2" fill="#262626"/>
<rect x="42.87" y="385" width="1" height="2" fill="#262626"/>
<rect x="64.84" y="385" width="1" height="2" fill="#262626"/>
<rect x="86.81" y="385" width="1" height="2" fill="#262626"/>
<rect x="108.78" y="385" width="1" height="2" fill="#262626"/>
<rect x="130.75" y="385" width="1" height="2" fill="#262626"/>
<rect x="152.72" y="385" width="1" height="2" fill="#262626"/>
<rect x="174.69" y="385" width="1" height="2" fill="#262626"/>
<rect x="196.66" y="385" width="1" height="2" fill="#262626"/>
<rect x="218.63" y="385" width="1" height="2" fill="#262626"/>
<rect x="240.60" y="385" width="1" height="2" fill="#262626"/>
<rect x="262.57" y="385" width="1" height="2" fill="#262626"/>
<rect x="284.54" y="385" width="1" height="2" fill="#262626"/>
<rect x="306.51" y="385" width="1" height="2" fill="#262626"/>
<rect x="328.48" y="385" width="1" height="2" fill="#262626"/>
<rect x="350.45" y="385" width="1" height="2" fill="#262626"/>
<rect x="372.42" y="385" width="1" height="2" fill="#262626"/>
<rect x="394.39" y="385" width="1" height="2" fill="#262626"/>
<rect x="416.36" y="385" width="1" height="2" fill="#262626"/>
<rect x="438.33" y="385" width="1" height="2" fill="#262626"/>
<rect x="460.30" y="385" width="1" height="2" fill="#262626"/>
<rect x="482.27" y="385" width="1" height="2" fill="#262626"/>
<rect x="504.24" y="385" width="1" height="2" fill="#262626"/>
<rect x="526.21" y="385" width="1" height="2" fill="#262626"/>
<rect x="548.18" y="385" width="1" height="2" fill="#262626"/>
<rect x="570.15" y="385" width="1" height="2" fill="#262626"/>
<rect x="592.12" y="385" width="1" height="2" fill="#262626"/>
<rect x="614.09" y="385" width="1" height="2" fill="#262626"/>
<rect x="636.06" y="385" width="1" height="2" fill="#262626"/>
<rect x="658.03" y="385" width="1" height="2" fill="#262626"/>
<rect x="680.00" y="385" width="1" height="2" fill="#262626"/>
<rect x="701.97" y="385" width="1" height="2" fill="#262626"/>
<rect x="723.94" y="385" width="1" height="2" fill="#262626"/>
</svg>
<svg class="abs" style="left:10.799999999999999px;top:47.8px" width="6" height="6" viewBox="0 0 6 6"><path d="M3 0.2 L3 5.2 M2.0 4.0 L3 5.6 L4.0 4.0" stroke="#333" stroke-width="0.8" fill="none"/></svg>
<div class="stat" style="left:17.8px;top:45.5px"><span style="display:inline-block;transform:scaleX(0.83);transform-origin:0 0">8,29</span></div>
<svg class="abs" style="left:40.0px;top:46.9px" width="7" height="7" viewBox="0 0 7 7"><circle cx="3.5" cy="3.5" r="2.45" fill="none" stroke="#303030" stroke-width="0.85"/><path d="M1.2 5.8 L5.8 1.2" stroke="#303030" stroke-width="0.8"/></svg>
<div class="stat" style="left:49.3px;top:45.5px"><span style="display:inline-block;transform:scaleX(0.83);transform-origin:0 0">15,26</span></div>
<svg class="abs" style="left:74.1px;top:47.8px" width="6" height="6" viewBox="0 0 6 6"><path d="M3 5.8 L3 0.8 M2.0 2.0 L3 0.4 L4.0 2.0" stroke="#333" stroke-width="0.8" fill="none"/></svg>
<div class="stat" style="left:81.1px;top:45.5px"><span style="display:inline-block;transform:scaleX(0.83);transform-origin:0 0">30,00</span></div>
<div class="leg" style="right:12.00px;top:45.9px;letter-spacing:0.0px">CPU Package Power [W]</div>
<svg class="abs" style="left:11.2px;top:173.8px" width="6" height="6" viewBox="0 0 6 6"><path d="M3 0.2 L3 5.2 M2.0 4.0 L3 5.6 L4.0 4.0" stroke="#333" stroke-width="0.8" fill="none"/></svg>
<div class="stat" style="left:17.6px;top:171.5px"><span style="display:inline-block;transform:scaleX(0.83);transform-origin:0 0">366,1</span></div>
<svg class="abs" style="left:43.7px;top:172.9px" width="7" height="7" viewBox="0 0 7 7"><circle cx="3.5" cy="3.5" r="2.45" fill="none" stroke="#303030" stroke-width="0.85"/><path d="M1.2 5.8 L5.8 1.2" stroke="#303030" stroke-width="0.8"/></svg>
<div class="stat" style="left:52.0px;top:171.5px"><span style="display:inline-block;transform:scaleX(0.83);transform-origin:0 0">2611</span></div>
<svg class="abs" style="left:76.6px;top:173.8px" width="6" height="6" viewBox="0 0 6 6"><path d="M3 5.8 L3 0.8 M2.0 2.0 L3 0.4 L4.0 2.0" stroke="#333" stroke-width="0.8" fill="none"/></svg>
<div class="stat" style="left:83.0px;top:171.5px"><span style="display:inline-block;transform:scaleX(0.83);transform-origin:0 0">3588</span></div>
<div class="leg" style="right:11.82px;top:171.9px;letter-spacing:0.18px">Average Effective Clock [MHz]</div>
<svg class="abs" style="left:10.799999999999999px;top:299.79999999999995px" width="6" height="6" viewBox="0 0 6 6"><path d="M3 0.2 L3 5.2 M2.0 4.0 L3 5.6 L4.0 4.0" stroke="#333" stroke-width="0.8" fill="none"/></svg>
<div class="stat" style="left:17.8px;top:297.5px"><span style="display:inline-block;transform:scaleX(0.83);transform-origin:0 0">67,3</span></div>
<svg class="abs" style="left:40.0px;top:298.9px" width="7" height="7" viewBox="0 0 7 7"><circle cx="3.5" cy="3.5" r="2.45" fill="none" stroke="#303030" stroke-width="0.85"/><path d="M1.2 5.8 L5.8 1.2" stroke="#303030" stroke-width="0.8"/></svg>
<div class="stat" style="left:49.3px;top:297.5px"><span style="display:inline-block;transform:scaleX(0.83);transform-origin:0 0">75,69</span></div>
<svg class="abs" style="left:74.1px;top:299.79999999999995px" width="6" height="6" viewBox="0 0 6 6"><path d="M3 5.8 L3 0.8 M2.0 2.0 L3 0.4 L4.0 2.0" stroke="#333" stroke-width="0.8" fill="none"/></svg>
<div class="stat" style="left:81.1px;top:297.5px"><span style="display:inline-block;transform:scaleX(0.83);transform-origin:0 0">92,3</span></div>
<div class="leg" style="right:11.89px;top:297.9px;letter-spacing:0.11px">Core Temperatures (avg) [°C]</div>
<div class="abs" style="left:0;top:1px;width:1px;height:60px;background:#c4c4c4"></div>
</div></body></html>
